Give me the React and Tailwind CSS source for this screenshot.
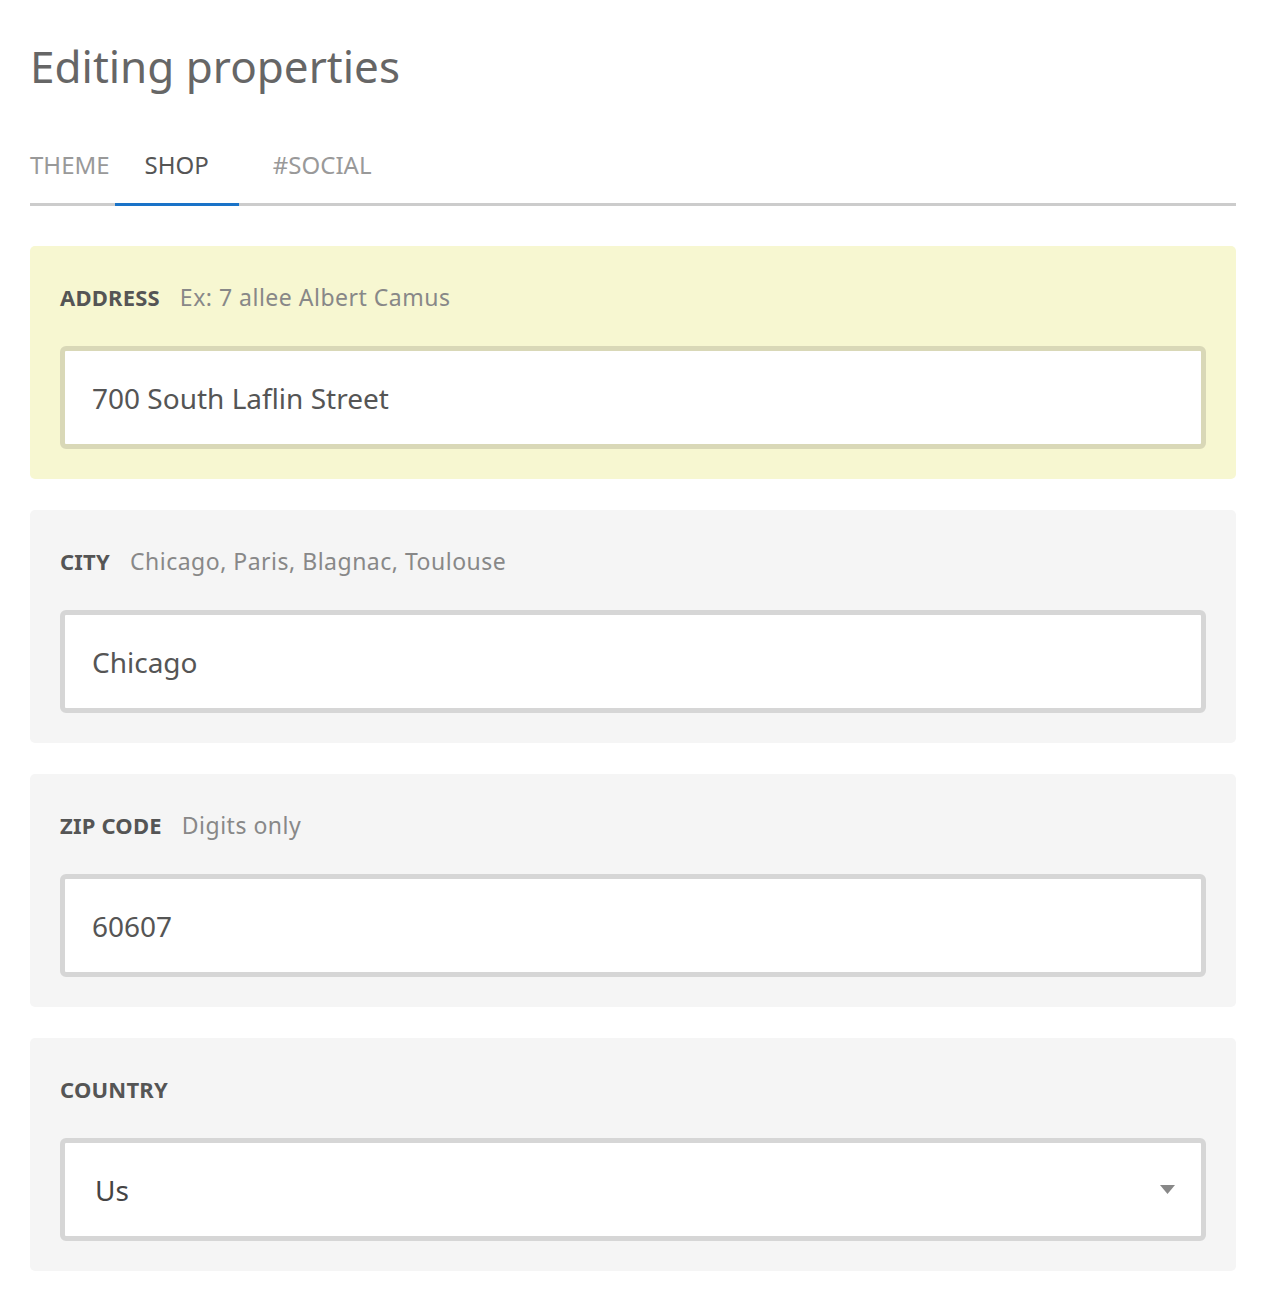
import React from "react";

const fields = [
  { label: "ADDRESS", hint: "Ex: 7 allee Albert Camus", value: "700 South Laflin Street", active: true },
  { label: "CITY", hint: "Chicago, Paris, Blagnac, Toulouse", value: "Chicago" },
  { label: "ZIP CODE", hint: "Digits only", value: "60607" },
];

const Field = ({ label, hint, value, active }) => (
  <div
    className={
      "rounded-[5px] px-[30px] pt-[30px] pb-[30px] " +
      (active ? "bg-[#f7f7d1]" : "bg-[#f5f5f5]")
    }
  >
    <div className="flex items-center h-[43px] gap-[20px]">
      <span className="font-bold text-[22px] text-[#555] tracking-[0.2px]">{label}</span>
      {hint && <span className="text-[23px] text-[#888] tracking-[0.5px]">{hint}</span>}
    </div>
    <div
      className={
        "mt-[27px] h-[103px] rounded-[6px] border-[5px] bg-white flex items-center pl-[27px] text-[28px] text-[#555] " +
        (active ? "border-[#d9d8b7]" : "border-[#d6d6d6]")
      }
    >
      {value}
    </div>
  </div>
);

export default function App() {
  return (
    <div
      className="bg-white min-h-screen px-[30px] pt-[36px]"
      style={{ fontFamily: '"Noto Sans", "Open Sans", sans-serif' }}
    >
      <h1 className="text-[44px] leading-[60px] text-[#666]">Editing properties</h1>

      <div className="mt-[51px] flex border-b-[3px] border-[#cccccc] text-[24px]">
        <div className="pr-[5px] pb-[20px] text-[#999]">THEME</div>
        <div className="px-[30px] pb-[20px] text-[#555] border-b-[3px] border-[#1a73c8] -mb-[3px]">SHOP</div>
        <div className="px-[34px] pb-[20px] text-[#999]">#SOCIAL</div>
      </div>

      <div className="mt-[40px] flex flex-col gap-[31px]">
        {fields.map((f) => (
          <Field key={f.label} {...f} />
        ))}

        <div className="rounded-[5px] bg-[#f5f5f5] p-[30px]">
          <div className="flex items-center h-[43px]">
            <span className="font-bold text-[22px] text-[#555] tracking-[0.2px]">COUNTRY</span>
          </div>
          <div className="mt-[27px] h-[103px] rounded-[6px] border-[5px] border-[#d6d6d6] bg-white flex items-center justify-between pl-[30px] pr-[26px] text-[28px] text-[#444]">
            <span>Us</span>
            <svg width="15" height="10" viewBox="0 0 15 10">
              <path d="M0 0 L15 0 L7.5 9 Z" fill="#888" />
            </svg>
          </div>
        </div>
      </div>
      <div className="h-[20px]" />
    </div>
  );
}
